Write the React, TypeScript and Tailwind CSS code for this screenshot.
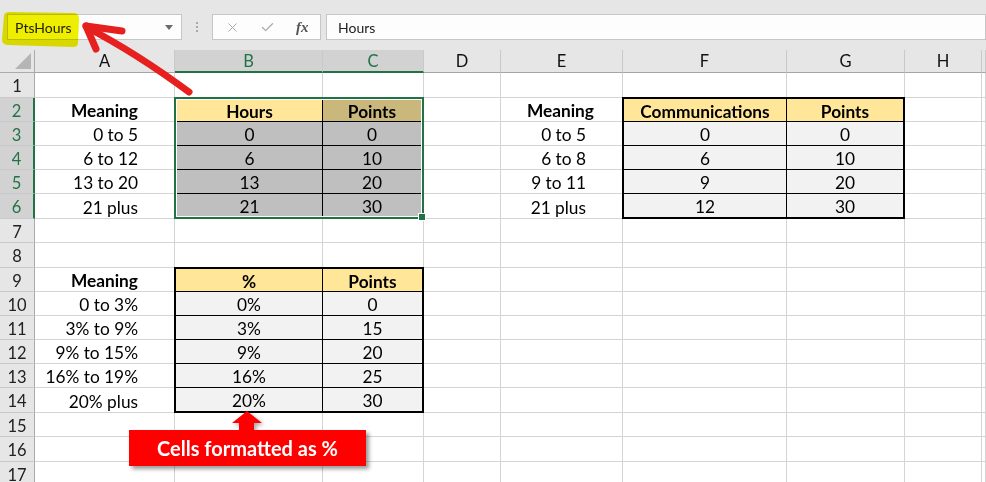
import React from 'react';
import { X, Check } from 'lucide-react';

type Cell = { t: string; b?: boolean; cls?: string };

const cellText: Record<string, Cell> = {
  A2: { t: 'Meaning', b: true, cls: 'justify-end pr-[36px]' },
  A3: { t: '0 to 5', cls: 'justify-end pr-[36px]' },
  A4: { t: '6 to 12', cls: 'justify-end pr-[36px]' },
  A5: { t: '13 to 20', cls: 'justify-end pr-[36px]' },
  A6: { t: '21 plus', cls: 'justify-end pr-[36px]' },
  E2: { t: 'Meaning', b: true, cls: 'justify-end pr-[28px]' },
  E3: { t: '0 to 5', cls: 'justify-end pr-[36px]' },
  E4: { t: '6 to 8', cls: 'justify-end pr-[36px]' },
  E5: { t: '9 to 11', cls: 'justify-end pr-[36px]' },
  E6: { t: '21 plus', cls: 'justify-end pr-[36px]' },
  A9: { t: 'Meaning', b: true, cls: 'justify-end pr-[36px]' },
  A10: { t: '0 to 3%', cls: 'justify-end pr-[36px]' },
  A11: { t: '3% to 9%', cls: 'justify-end pr-[36px]' },
  A12: { t: '9% to 15%', cls: 'justify-end pr-[36px]' },
  A13: { t: '16% to 19%', cls: 'justify-end pr-[36px]' },
  A14: { t: '20% plus', cls: 'justify-end pr-[36px]' },
};

const cols = ['A', 'B', 'C', 'D', 'E', 'F', 'G', 'H', 'I'];
const rows = Array.from({ length: 17 }, (_, i) => i + 1);

function covered(c: string, r: number) {
  if ((c === 'B' || c === 'C') && r >= 2 && r <= 6) return true;
  if ((c === 'F' || c === 'G') && r >= 2 && r <= 6) return true;
  if ((c === 'B' || c === 'C') && r >= 9 && r <= 14) return true;
  return false;
}

function TCell({ children, cls }: { children?: React.ReactNode; cls: string }) {
  return (
    <div className={`flex min-h-0 min-w-0 items-center justify-center overflow-hidden pt-[3px] text-[17.3px] leading-[18px] text-black ${cls}`}>
      {children}
    </div>
  );
}

function SelectionTable() {
  const data = [
    ['0', '0'],
    ['6', '10'],
    ['13', '20'],
    ['21', '30'],
  ];
  return (
    <div className="relative z-10 col-start-3 col-span-2 row-start-3 row-span-5 -ml-px -mt-px border-2 border-[#217346]">
      <div className="grid h-full grid-cols-[146px_minmax(0,1fr)] grid-rows-[22px_24px_24px_24px_22px] overflow-hidden border border-white">
        <TCell cls="bg-[#ffe699] border-r border-b border-black font-bold">Hours</TCell>
        <TCell cls="bg-[#c9b77b] border-b border-black font-bold">Points</TCell>
        {data.map((d, i) => (
          <React.Fragment key={i}>
            <TCell cls={`bg-[#bfbfbf] border-r border-black ${i < 3 ? 'border-b' : ''}`}>{d[0]}</TCell>
            <TCell cls={`bg-[#bfbfbf] border-black ${i < 3 ? 'border-b' : ''}`}>{d[1]}</TCell>
          </React.Fragment>
        ))}
      </div>
      <div className="absolute -bottom-[4px] -right-[4px] h-[8px] w-[8px] border border-white bg-[#217346]" />
    </div>
  );
}

function CommTable() {
  const data = [
    ['0', '0'],
    ['6', '10'],
    ['9', '20'],
    ['12', '30'],
  ];
  return (
    <div className="relative z-10 col-start-7 col-span-2 row-start-3 row-span-5 -ml-px -mt-px border-2 border-black">
      <div className="grid h-full grid-cols-[163px_minmax(0,1fr)] grid-rows-[23px_24px_24px_24px_23px] overflow-hidden">
        <TCell cls="bg-[#ffe699] border-r border-b border-black font-bold">Communications</TCell>
        <TCell cls="bg-[#ffe699] border-b border-black font-bold">Points</TCell>
        {data.map((d, i) => (
          <React.Fragment key={i}>
            <TCell cls={`bg-[#f2f2f2] border-r border-black ${i < 3 ? 'border-b' : ''}`}>{d[0]}</TCell>
            <TCell cls={`bg-[#f2f2f2] border-black ${i < 3 ? 'border-b' : ''}`}>{d[1]}</TCell>
          </React.Fragment>
        ))}
      </div>
    </div>
  );
}

function PctTable() {
  const data = [
    ['0%', '0'],
    ['3%', '15'],
    ['9%', '20'],
    ['16%', '25'],
    ['20%', '30'],
  ];
  return (
    <div className="relative z-10 col-start-3 col-span-2 row-start-10 row-span-6 -ml-px -mt-px border-2 border-black">
      <div className="grid h-full grid-cols-[147px_minmax(0,1fr)] grid-rows-[23px_24px_24px_24px_24px_23px] overflow-hidden">
        <TCell cls="bg-[#ffe699] border-r border-b border-black font-bold">%</TCell>
        <TCell cls="bg-[#ffe699] border-b border-black font-bold">Points</TCell>
        {data.map((d, i) => (
          <React.Fragment key={i}>
            <TCell cls={`bg-[#f2f2f2] border-r border-black ${i < 4 ? 'border-b' : ''}`}>{d[0]}</TCell>
            <TCell cls={`bg-[#f2f2f2] border-black ${i < 4 ? 'border-b' : ''}`}>{d[1]}</TCell>
          </React.Fragment>
        ))}
      </div>
    </div>
  );
}

function FormulaBar() {
  return (
    <div className="h-[50px] bg-[#e6e6e6] pt-[14px]">
      <div className="flex h-[26px] items-stretch">
        <div className="ml-[7px] flex w-[175px] items-center justify-between border border-[#c6c6c6] bg-[#fdfdfd] pl-[7px] pr-[7px]">
          <span className="text-[14px] text-[#222]">PtsHours</span>
          <svg width="8" height="5" viewBox="0 0 8 5" className="mr-[1px]">
            <path d="M0 0 L8 0 L4 5 Z" fill="#6b6b6b" />
          </svg>
        </div>
        <div className="flex w-[30px] flex-col items-center justify-center gap-[2px]">
          <span className="h-[2px] w-[2px] bg-[#a8a8a8]" />
          <span className="h-[2px] w-[2px] bg-[#a8a8a8]" />
          <span className="h-[2px] w-[2px] bg-[#a8a8a8]" />
        </div>
        <div className="flex w-[109px] items-center border border-[#c6c6c6] bg-[#fdfdfd]">
          <X size={15} strokeWidth={1.6} color="#a9a9a9" className="ml-[12px]" />
          <Check size={15} strokeWidth={2} color="#a9a9a9" className="ml-[20px]" />
          <span className="ml-[21px] font-['Liberation_Serif',serif] text-[15px] font-bold italic text-[#555]">fx</span>
        </div>
        <div className="ml-[5px] flex flex-1 items-center border border-[#c6c6c6] bg-[#fdfdfd] pl-[11px]">
          <span className="text-[14px] text-[#222]">Hours</span>
        </div>
      </div>
    </div>
  );
}

export default function App() {
  const selectedCols = ['B', 'C'];
  return (
    <div className="relative h-[482px] w-[986px] overflow-hidden bg-white font-['Lato',sans-serif]">
      <FormulaBar />
      <div className="grid grid-cols-[35px_140px_148px_101px_77px_122px_164px_118px_77px_1fr] grid-rows-[23px_25px_24px_24px_24px_24px_25px_24px_25px_24px_24px_24px_24px_24px_25px_24px_25px_24px]">
        <SelectionTable />
        <CommTable />
        <PctTable />
        {/* corner */}
        <div className="relative border-r border-b border-[#ababab] bg-[#e6e6e6]">
          <svg width="16" height="16" viewBox="0 0 16 16" className="absolute bottom-[3px] right-[3px]">
            <path d="M16 0 L16 16 L0 16 Z" fill="#b5b5b5" />
          </svg>
        </div>
        {cols.map((c) => {
          const sel = selectedCols.includes(c);
          return (
            <div
              key={c}
              className={`flex items-center justify-center border-r border-[#c9c9c9] pt-[1px] text-[16.5px] ${
                sel ? 'border-b-2 border-b-[#217346] bg-[#d2d2d2] text-[#217346]' : 'border-b border-b-[#a5a5a5] bg-[#e6e6e6] text-[#111]'
              }`}
            >
              {c === 'I' ? '' : c}
            </div>
          );
        })}
        {rows.map((r) => {
          const sel = r >= 2 && r <= 6;
          return (
            <React.Fragment key={r}>
              <div
                className={`flex items-center justify-center border-b border-b-[#c9c9c9] pt-[2px] text-[16.5px] leading-[18px] ${
                  sel ? 'border-r-2 border-r-[#217346] bg-[#d2d2d2] text-[#217346]' : 'border-r border-r-[#ababab] bg-[#e6e6e6] text-[#222]'
                }`}
              >
                {r}
              </div>
              {cols.map((c) => {
                if (covered(c, r)) return null;
                const ct = cellText[`${c}${r}`];
                return (
                  <div
                    key={c}
                    className={`flex items-center border-r border-b border-[#d4d4d4] pt-[3px] text-[17.3px] leading-[18px] text-black ${ct?.cls ?? ''} ${
                      ct?.b ? 'font-bold' : ''
                    }`}
                  >
                    {ct?.t}
                  </div>
                );
              })}
            </React.Fragment>
          );
        })}
      </div>

      {/* Annotations */}
      <svg className="pointer-events-none absolute left-0 top-0 z-20 mix-blend-multiply" width="986" height="482">
        <path d="M4 15 Q5 12 9 12 L75 13 Q79 14 79 19 L78 43 Q78 47 73 47 L7 45 Q2 44 2 40 Z" fill="#f0f000" />
      </svg>
      <svg className="pointer-events-none absolute left-0 top-0 z-20" width="986" height="482">
        <g stroke="#e5201e" strokeWidth="7" strokeLinecap="round" strokeLinejoin="round" fill="none">
          <path d="M189 92 C170 78, 136 53, 88 28" />
          <path d="M86 26 L122 31" />
          <path d="M86 26 L96 49" />
        </g>
      </svg>

      <svg className="pointer-events-none absolute left-0 top-0 z-20 drop-shadow-[2px_2px_2px_rgba(0,0,0,0.35)]" width="986" height="482">
        <path d="M247 411 L262 423 L254 423 L254 431 L239 431 L239 423 L232 423 Z" fill="#ff0000" />
      </svg>
      <div className="absolute left-[129px] top-[430px] z-20 flex h-[36px] w-[237px] items-center justify-center bg-[#ff0000] text-[20px] font-bold text-white shadow-[3px_3px_4px_rgba(0,0,0,0.4)]">
        Cells formatted as %
      </div>
    </div>
  );
}
